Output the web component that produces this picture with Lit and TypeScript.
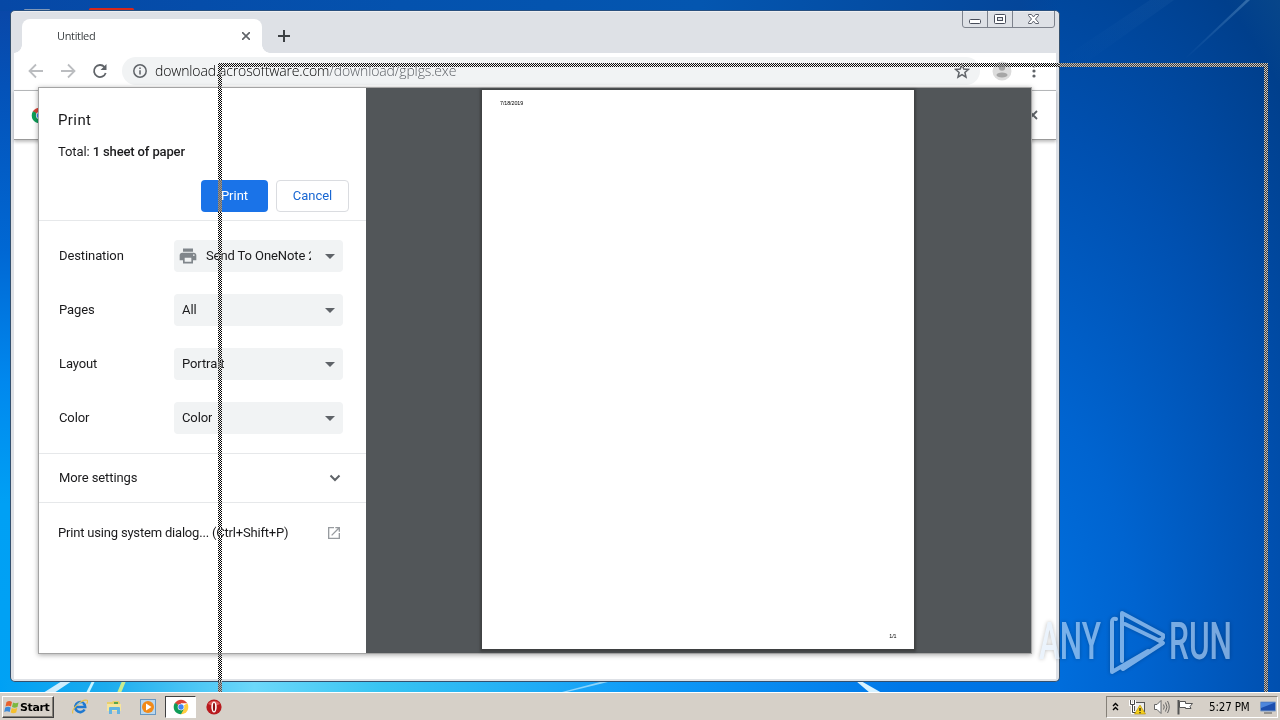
import { LitElement, html, svg, css } from "lit";
import { customElement, property } from "lit/decorators.js";

const chromeLogo = svg`
  <circle cx="12" cy="12" r="11" fill="#fff"></circle>
  <path d="M12 12 2.500 6.500A11 11 0 0 1 21.500 6.500H12z" fill="#db4437"></path>
  <path d="M12 12 21.500 6.500A11 11 0 0 1 12 23l-1-3z" fill="#ffcd40"></path>
  <path d="M12 12 12 23A11 11 0 0 1 2.500 6.500l3 2z" fill="#0f9d58"></path>
  <path d="M7.500 14.500 2.500 6.500 6 7l3 6zM16.500 14.500 12 23l-1-3 3-5z" fill="#0f9d58"></path>
  <circle cx="12" cy="12" r="5" fill="#fff"></circle>
  <circle cx="12" cy="12" r="4" fill="#4285f4"></circle>`;

/* One "label + drop-down" line of the print form. */
@customElement("setting-row")
class SettingRow extends LitElement {
  @property() label = "";
  @property() value = "";
  @property({ type: Boolean }) printer = false;

  static styles = css`
    :host { display: flex; align-items: center; height: 54px; padding: 0 23px 0 20px; }
    .label { width: 115px; flex: none; }
    .select { width: 169px; height: 32px; box-sizing: border-box; padding: 0 8px; border-radius: 4px;
      background: #f1f3f4; display: flex; align-items: center; }
    .printer .value { max-width: 105px; }
    .printer { padding-left: 4px; }
    .value { white-space: nowrap; overflow: hidden; }
    .icon { width: 20px; height: 20px; margin-right: 8px; flex: none; fill: #80868b; }
    .arrow { width: 10px; height: 5px; margin-left: auto; flex: none; fill: #5f6368; }
  `;

  render() {
    return html`
      <div class="label">${this.label}</div>
      <div class="select ${this.printer ? "printer" : ""}">
        ${this.printer
          ? html`<svg class="icon" viewBox="0 0 24 24"><path d="M19 8H5c-1.660 0-3 1.340-3 3v6h4v4h12v-4h4v-6c0-1.660-1.340-3-3-3zm-3 11H8v-5h8v5zm3-7c-.55 0-1-.45-1-1s.45-1 1-1 1 .45 1 1-.45 1-1 1zm-1-9H6v4h12V3z"></path></svg>`
          : ""}
        <span class="value">${this.value}</span>
        <svg class="arrow" viewBox="0 0 10 5"><path d="M0 0h10L5 5z"></path></svg>
      </div>`;
  }
}

@customElement("print-dialog")
class PrintDialog extends LitElement {
  static styles = css`
    :host { display: flex; width: 992px; height: 565px; background: #fff;
      box-shadow: 0 0 0 1px #a4a4a4, 0 1px 5px 1px rgba(0,0,0,.35);
      font: 13px/18px Roboto, sans-serif; letter-spacing: -.1px; color: #1a1a1c; }
    .side { width: 327px; display: flex; flex-direction: column; flex: none; }
    .head { height: 133px; box-sizing: border-box; padding: 22px 17px 0 19px; border-bottom: 1px solid #e6e8ea; }
    .title { font-size: 15px; line-height: 20px; letter-spacing: .4px; }
    .total { margin-top: 13px; letter-spacing: -.1px; }
    .total b { font-weight: 500; letter-spacing: -.14px; }
    .buttons { display: flex; gap: 8px; justify-content: flex-end; margin-top: 19px; letter-spacing: 0; }
    .btn { height: 32px; box-sizing: border-box; border-radius: 4px; line-height: 32px; text-align: center; }
    .primary { width: 67px; background: #1a73e8; color: #fff; }
    .plain { width: 73px; border: 1px solid #dadce0; color: #1967d2; line-height: 30px; }
    .form { padding: 8px 0; height: 216px; border-bottom: 1px solid #e6e8ea; }
    .more { height: 48px; border-bottom: 1px solid #e6e8ea; display: flex; align-items: center;
      justify-content: space-between; padding: 0 25px 0 20px; line-height: 20px; }
    .system { display: flex; align-items: center; justify-content: space-between; height: 60px; padding: 0 24px 0 19px;
      letter-spacing: -.19px; }
    .chev { width: 12px; height: 8px; fill: none; stroke: #5f6368; stroke-width: 2; }
    .ext { width: 16px; height: 16px; fill: #979b9f; }
    .preview { flex: 1; background: #525659; display: flex; justify-content: flex-start; padding: 2px 0 0 116px; }
    .page { width: 432px; height: 559px; box-sizing: border-box; padding: 10px 17.500px 9px 18px; background: #fff;
      box-shadow: 0 1px 2px 2px rgba(50,50,50,.6); display: flex; flex-direction: column; justify-content: space-between;
      font: 5.400px/7px "Liberation Sans", sans-serif; color: #000; }
    .num { text-align: right; }
  `;

  render() {
    return html`
      <div class="side">
        <div class="head">
          <div class="title">Print</div>
          <div class="total">Total: <b>1 sheet of paper</b></div>
          <div class="buttons"><div class="btn primary">Print</div><div class="btn plain">Cancel</div></div>
        </div>
        <div class="form">
          <setting-row label="Destination" value="Send To OneNote 2010" printer></setting-row>
          <setting-row label="Pages" value="All"></setting-row>
          <setting-row label="Layout" value="Portrait"></setting-row>
          <setting-row label="Color" value="Color"></setting-row>
        </div>
        <div class="more"><span>More settings</span>
          <svg class="chev" viewBox="0 0 12 8"><path d="M1.500 1.500 6 6l4.500-4.500"></path></svg></div>
        <div class="system"><span>Print using system dialog... (Ctrl+Shift+P)</span>
          <svg class="ext" viewBox="0 0 24 24"><path d="M19 19H5V5h7V3H3v18h18v-9h-2v7zM14 3v2h3.590l-9.830 9.830 1.410 1.410L19 6.410V10h2V3h-7z"></path></svg></div>
      </div>
      <div class="preview"><div class="page"><div>7/18/2019</div><div class="num">1/1</div></div></div>`;
  }
}

@customElement("browser-window")
class BrowserWindow extends LitElement {
  static styles = css`
    :host { display: flex; flex-direction: column; width: 1050px; height: 672px; box-sizing: border-box;
      border: 1px solid #34506e; border-top-color: #28507f; border-radius: 5px; padding: 0 3px 2px;
      background: #dee1e6; position: relative; isolation: isolate; box-shadow: inset 0 1px #eeeff2; }
    .tabs { display: flex; height: 42px; flex: none; align-items: flex-end; padding-left: 8px; position: relative; }
    .tab { width: 240px; height: 34px; box-sizing: border-box; padding: 0 12px 0 35px; border-radius: 8px 8px 0 0; background: #fff;
      display: flex; align-items: center; justify-content: space-between; position: relative;
      font: 11px/14px "Open Sans", sans-serif; letter-spacing: -.35px; color: #3c4043; }
    .tab::before, .tab::after { content: ""; position: absolute; bottom: 0; width: 8px; height: 8px; }
    .tab::before { left: -8px; background: radial-gradient(circle at 0 0, transparent 7.500px, #fff 8px); }
    .tab::after { right: -8px; background: radial-gradient(circle at 100% 0, transparent 7.500px, #fff 8px); }
    .tabx { width: 8px; height: 8px; stroke: #5f6368; stroke-width: 1.600; }
    .plus { width: 12px; height: 12px; margin: 0 0 11px 16px; stroke: #3c4043; stroke-width: 2; }
    .caps { position: absolute; top: 0; right: 1px; width: 93px; height: 17px; }
    .bar { height: 37px; flex: none; background: #fff; display: flex; align-items: center; padding: 0 0 1px 14px;
      box-sizing: border-box; }
    .nav { width: 16px; height: 16px; margin-right: 16px; flex: none; fill: none; stroke: #bbbdc0; stroke-width: 1.800; }
    .reload { stroke: #5f6368; }
    .omni { width: 858px; height: 28px; box-sizing: border-box; margin-left: -2px; border-radius: 14px; background: #f1f3f4;
      display: flex; align-items: center; padding: 0 10px 0 11px;
      font: 14px/20px "Open Sans", sans-serif; font-weight: 300; color: #000; }
    .info { width: 14px; height: 14px; margin-right: 8px; flex: none; }
    .url { letter-spacing: -.15px; white-space: nowrap; }
    .path { color: #5f6368; }
    .star { width: 16px; height: 16px; margin-left: auto; fill: none; stroke: #5f6368; stroke-width: 1.500; }
    .avatar { width: 20px; height: 20px; margin-left: 12px; }
    .dots { width: 4px; height: 16px; margin-left: 20px; fill: #5f6368; }
    .infobar { height: 48px; flex: none; background: #fff; display: flex; align-items: center; justify-content: space-between;
      padding: 0 18px 0 17px; border-top: 1px solid #b4b6b8; border-bottom: 1px solid #999; box-shadow: 0 2px 3px rgba(0,0,0,.25); z-index: 1; }
    .logo { width: 17px; height: 17px; }
    .ix { width: 10px; height: 10px; stroke: #5f6368; stroke-width: 1.800; }
    .content { flex: 1; background: #fff; }
    .dialog { position: absolute; left: 28px; top: 77px; z-index: 2; }
  `;

  render() {
    return html`
      <div class="tabs">
        <div class="tab"><span>Untitled</span><svg class="tabx" viewBox="0 0 8 8"><path d="M0 0l8 8M8 0L0 8"></path></svg></div>
        <svg class="plus" viewBox="0 0 12 12"><path d="M6 0v12M0 6h12"></path></svg>
        <svg class="caps" viewBox="0 0 93 17" fill="none" stroke="#7d828c">
          <path d="M.5 0v14q0 2.500 2.500 2.500h87q2.500 0 2.500-2.500V0M25.500 0v16M50.500 0v16"></path>
          <rect x="7.500" y="8.500" width="11" height="4" rx="1" fill="#fff" stroke="#484d5a"></rect>
          <rect x="32.500" y="3.500" width="11" height="9" rx="1" fill="#fff" stroke="#484d5a"></rect>
          <rect x="35.500" y="6.500" width="5" height="3" fill="#dee1e6" stroke="#484d5a"></rect>
          <path d="M66.500 3.500h3l2 2.500 2-2.500h3v1l-3 3.500 3 3.500v1h-3l-2-2.500-2 2.500h-3v-1l3-3.500-3-3.500z" fill="#fff" stroke="#5a5f6b"></path>
        </svg>
      </div>
      <div class="bar">
        <svg class="nav" viewBox="0 0 16 16"><path d="M15 8H2M8 1.500 1.500 8 8 14.500"></path></svg>
        <svg class="nav" viewBox="0 0 16 16"><path d="M1 8h13M8 1.500 14.500 8 8 14.500"></path></svg>
        <svg class="nav reload" viewBox="0 0 16 16"><path d="M13.700 10A6 6 0 1 1 12.500 4"></path><path d="M14.500 1v6h-6z" fill="#5f6368" stroke="none"></path></svg>
        <div class="omni">
          <svg class="info" viewBox="0 0 14 14"><circle cx="7" cy="7" r="6.200" fill="none" stroke="#5f6368" stroke-width="1.500"></circle><path d="M7 6.200v4.300M7 3.500v1.600" stroke="#5f6368" stroke-width="1.500"></path></svg>
          <span class="url">download.acrosoftware.com<span class="path">/download/gplgs.exe</span></span>
          <svg class="star" viewBox="0 0 16 16"><path d="M8 1.800 9.800 6l4.700.4-3.600 3.100 1.100 4.600L8 11.700l-4 2.400 1.100-4.600L1.500 6.400 6.200 6z"></path></svg>
        </div>
        <svg class="avatar" viewBox="0 0 20 20"><circle cx="10" cy="10" r="9.500" fill="#dcdcdc"></circle><circle cx="10" cy="6.500" r="3.200" fill="#a6a6a6"></circle><ellipse cx="10" cy="14" rx="5.500" ry="2.600" fill="#a6a6a6"></ellipse></svg>
        <svg class="dots" viewBox="0 0 4 16"><circle cx="2" cy="3" r="1.600"></circle><circle cx="2" cy="8" r="1.600"></circle><circle cx="2" cy="13" r="1.600"></circle></svg>
      </div>
      <div class="infobar">
        <svg class="logo" viewBox="0 0 24 24">${chromeLogo}</svg>
        <svg class="ix" viewBox="0 0 10 10"><path d="M1 1l8 8M9 1 1 9"></path></svg>
      </div>
      <div class="content"></div>
      <print-dialog class="dialog"></print-dialog>`;
  }
}

@customElement("task-bar")
class TaskBar extends LitElement {
  static styles = css`
    :host { display: flex; align-items: center; height: 28px; box-sizing: border-box; padding: 1px 2px 0 2px;
      background: #d6d0c8; border-top: 1px solid #fff;
      font: 11.500px/14px "DejaVu Sans Condensed", "DejaVu Sans", sans-serif; font-stretch: condensed; color: #000; }
    .start { width: 52px; height: 22px; box-sizing: border-box; display: flex; align-items: center; gap: 1px; padding-left: 1px;
      border: 1px solid; border-color: #fff #404040 #404040 #fff; box-shadow: inset -1px -1px #858078;
      font: bold 11px/14px "DejaVu Sans", sans-serif; letter-spacing: -.4px; }
    .start span { padding-top: 1px; }
    .flag { width: 15px; height: 16px; }
    .quick { display: flex; align-items: center; padding-left: 9px; }
    .item { width: 34px; height: 22px; box-sizing: border-box; display: flex; align-items: center; justify-content: center; }
    .item:nth-child(3) { width: 33px; }
    .active { width: 31px; margin: 0 1px; background: #fff; border: 1px solid; border-color: #404040 #fff #fff #404040; }
    .ico { width: 16px; height: 16px; }
    .tray { margin-left: auto; width: 172px; height: 22px; box-sizing: border-box; display: flex; align-items: center;
      border: 1px solid; border-color: #858078 #fff #fff #858078; padding: 0 0 0 5px; }
    .up { width: 7px; height: 9px; margin: 0 10px 2px 0; }
    .sys { width: 17px; height: 16px; margin-right: 7px; flex: none; }
    .time { margin-left: 8px; width: 51px; letter-spacing: -.15px; white-space: nowrap; }
  `;

  render() {
    return html`
      <div class="start">
        <svg class="flag" viewBox="0 0 15 16">
          <path d="M2.500 3q3-2 5.500 0L7 7.500q-2.500-1.500-5.500 0z" fill="#e8612c"></path>
          <path d="M9 3.500q2.500 1.500 5.500 0L13.500 8q-3 1.500-5.500 0z" fill="#7cb83f"></path>
          <path d="M1.200 8.500q3-1.500 5.500 0L5.700 13q-2.700-1.500-5.500 0z" fill="#3c8ad8"></path>
          <path d="M7.700 9q2.500 1.500 5.500 0l-1 4.500q-3 1.500-5.500 0z" fill="#f5bf2c"></path>
        </svg><span>Start</span>
      </div>
      <div class="quick">
        <div class="item"><svg class="ico" viewBox="0 0 16 16">
          <path d="M12.600 10.500A5 5 0 1 1 13.200 8H4.500" fill="none" stroke="#1f78d0" stroke-width="2.600"></path>
          <path d="M1 14.500C-1.500 11 10-.5 15 1.300c1 .6.500 2.200-.3 3.500" fill="none" stroke="#e9c04a" stroke-width="1.200"></path>
          <path d="M5 5.500q3-3 6-.5" fill="none" stroke="#7fc4f4"></path></svg></div>
        <div class="item"><svg class="ico" viewBox="0 0 16 16">
          <path d="M1 3h5l1-1h6l1 2v8H1z" fill="#e9cf6c"></path><path d="M1 5h14v7H1z" fill="#f6e59c"></path>
          <path d="M8 3h4v2H8z" fill="#5da64a"></path>
          <path d="M3 15V9q0-1 1-1h9q1 0 1 1v6h-3v-4H6v4z" fill="#62b4e2"></path></svg></div>
        <div class="item"><svg class="ico" viewBox="0 0 16 16">
          <rect x=".5" y=".5" width="15" height="15" fill="#b9d7ee" stroke="#6697c2"></rect>
          <circle cx="8" cy="8" r="6" fill="#f28a18"></circle><path d="M6 4.500 11.500 8 6 11.500z" fill="#fff"></path></svg></div>
        <div class="item active"><svg class="ico" viewBox="0 0 24 24">${chromeLogo}</svg></div>
        <div class="item"><svg class="ico" viewBox="0 0 16 16">
          <circle cx="8" cy="8" r="7.600" fill="#b81a1e"></circle><path d="M2 5a7 6 0 0 1 12 0q-6 3-12 0" fill="#e0595a"></path>
          <ellipse cx="8" cy="8" rx="2.700" ry="5.500" fill="#fff"></ellipse><ellipse cx="8" cy="8" rx="1.100" ry="4.300" fill="#8e1014"></ellipse></svg></div>
      </div>
      <div class="tray">
        <svg class="up" viewBox="0 0 7 9" fill="none" stroke="#000" stroke-width="1.400"><path d="M1 4l2.500-2.500L6 4M1 8l2.500-2.500L6 8"></path></svg>
        <svg class="sys" viewBox="0 0 17 16"><rect x="5.500" y="3.500" width="10" height="9" fill="#eee" stroke="#555"></rect>
          <path d="M1.500 1v4.500h4V1M3.500 5.500v8h5" fill="none" stroke="#fff" stroke-width="3"></path>
          <path d="M1.500 1v4.500h4V1M3.500 5.500v8h5" fill="none" stroke="#444"></path>
          <path d="M11 6 16.500 15h-11z" fill="#f6cf1c" stroke="#b08a00" stroke-width=".6"></path><path d="M11 9v3M11 13v1.200" stroke="#222" stroke-width="1.300"></path></svg>
        <svg class="sys" viewBox="0 0 17 16" fill="none" stroke="#666"><path d="M1.500 5.500h2.500l4-4v13l-4-4H1.500z" fill="#fff"></path><path d="M10.500 5.500q1.500 2.500 0 5M12.500 3.500q3 4.500 0 9M14.500 2q3.500 6 0 12"></path></svg>
        <svg class="sys" viewBox="0 0 17 16"><path d="M1.500 1v14.500" stroke="#555" stroke-width="2"></path><path d="M2.500 2.500h6v2h7l-2.500 3 1 2H8.500v-1h-6z" fill="#fff" stroke="#555"></path></svg>
        <span class="time">5:27 PM</span>
        <svg class="ico" viewBox="0 0 16 16"><path d="M.5 3h15v9H.5z" fill="#1c4fae" stroke="#7e9cc4"></path><path d="M1 3.500h14L1 9z" fill="#4d86dc"></path><path d="M4 14h8" stroke="#555"></path></svg>
      </div>`;
  }
}

@customElement("app-root")
class AppRoot extends LitElement {
  static styles = css`
    :host { display: block; }
    .desk { width: 1280px; height: 720px; overflow: hidden; position: relative; display: flex; flex-direction: column;
      justify-content: flex-end; isolation: isolate;
      background:
        linear-gradient(90deg, #0648a6 0, #0452ae 400px, #0456b0 700px, #04469a 1020px, transparent 1060px) 0 0 / 100% 11px no-repeat,
        linear-gradient(180deg, #0a46a6 0, #0452b8 12%, #0068d4 35%, #0088ee 53%, #00a0f4 70%, #00a2f4 100%) 0 0 / 14px 100% no-repeat,
        radial-gradient(ellipse 460px 900px at 1000px 660px, #0074e4 0, #0064d0 30%, #0050b0 60%, #003f8c 88%, #0c4a88 100%); }
    .wall { position: absolute; left: 0; top: 0; width: 1280px; height: 720px; }
    .win { position: absolute; left: 10px; top: 10px; }
    .edge { position: absolute; mix-blend-mode: difference;
      background: repeating-conic-gradient(#fff 0 25%, #000 0 50%) 0 0 / 2px 2px; }
    .gray { position: absolute; mix-blend-mode: saturation; background: #808080; }
    .top { left: 218px; top: 63px; width: 1050px; height: 4px; }
    .left { left: 218px; top: 67px; width: 4px; height: 625px; }
    .right { left: 1264px; top: 67px; width: 4px; height: 625px; }
    .mark { position: absolute; left: 1030px; top: 600px; width: 250px; height: 80px; opacity: .55;
      filter: drop-shadow(0 0 2px rgba(0,0,0,.45)); font: 500 51px Roboto, sans-serif; }
    .task { position: relative; }
  `;

  render() {
    return html`
      <div class="desk">
        <svg class="wall" viewBox="0 0 1280 720">
          <defs>
            <linearGradient id="low"><stop offset="0" stop-color="#00a0f4"></stop><stop offset=".1" stop-color="#1cacee"></stop><stop offset=".24" stop-color="#6cd8fa"></stop><stop offset=".36" stop-color="#38c4f2"></stop><stop offset=".6" stop-color="#109cf8"></stop><stop offset=".85" stop-color="#0078e8"></stop><stop offset="1" stop-color="#0070e0"></stop></linearGradient>
            <linearGradient id="ray" x1="0" y1="1" x2="1" y2="0"><stop offset="0" stop-color="#5f9ad0" stop-opacity="0"></stop><stop offset="1" stop-color="#6da0d0" stop-opacity=".45"></stop></linearGradient>
          </defs>
          <rect y="680" width="1060" height="14" fill="url(#low)"></rect>
          <path d="M1185 58 1246 0h4L1187 58z" fill="url(#ray)"></path>
          <path d="M1060 60 1150 0h24L1090 60z" fill="url(#ray)" opacity=".15"></path>
          <path d="M43 693 62 681h10L54 693z" fill="#fff" opacity=".8"></path>
          <path d="M86 693 92 681h3l-6 12z" fill="#c8f4ff"></path>
          <path d="M117 693 122 681h4l-5 12z" fill="#c8ec90"></path>
          <path d="M562 692 600 682h8L567 692z" fill="#8cd4fa"></path>
          <path d="M856 681 870 693h12L861 681z" fill="#d8f2ff"></path>
          <rect x="89" y="8" width="45" height="3" rx="1.500" fill="#d8281c"></rect>
          <rect x="24" y="9" width="26" height="1" rx="1" fill="#8098b8"></rect>
        </svg>
        <browser-window class="win"></browser-window>
        <div class="edge top"></div><div class="edge left"></div><div class="edge right"></div>
        <div class="gray top"></div><div class="gray left"></div><div class="gray right"></div>
        <svg class="mark" viewBox="0 0 250 80" fill="#dcebfa">
          <text x="9" y="59" textLength="62" lengthAdjust="spacingAndGlyphs">ANY</text>
          <text x="139" y="59" textLength="63" lengthAdjust="spacingAndGlyphs">RUN</text>
          <g fill="none" stroke="#dcebfa" stroke-width="4" stroke-linejoin="round" stroke-linecap="round">
            <path d="M86 19q-4-1-4 3v50l12-7 24-14"></path>
            <path d="M92 61V13l41 22q1 5-5 5L95 24"></path>
            <path d="M128 40 133 43 93 69 92 68"></path>
          </g>
        </svg>
        <task-bar class="task"></task-bar>
      </div>`;
  }
}
